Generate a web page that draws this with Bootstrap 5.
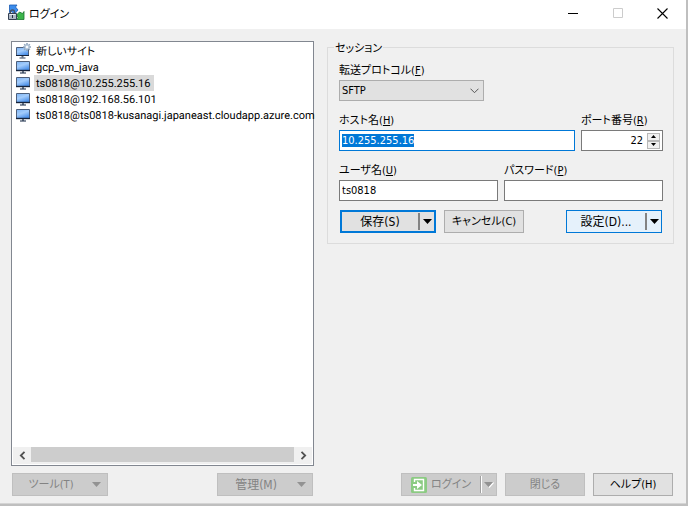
<!DOCTYPE html>
<html lang="ja">
<head>
<meta charset="utf-8">
<meta name="viewport" content="width=device-width, initial-scale=1">
<title>ログイン</title>
<link href="https://cdn.jsdelivr.net/npm/bootstrap@5.3.0/dist/css/bootstrap.min.css" rel="stylesheet">
<style>
body { font: 11px/16px "DejaVu Sans Condensed", "Noto Sans CJK JP", sans-serif; color: #000; background: #bfbfbf; }
body, button, select, input, .titlebar { font-feature-settings: "palt"; }
.ja { font-size: 11px; }
.kanji { font-size: 12px; }
.window { background: #f0f0f0; margin: 0 2px 2px 0; border-bottom: 1px solid #d4d4d4; }
.titlebar { height: 29px; background: #fff; padding: 0 1px 0 8px; }
.winbtn { width: 45px; height: 26px; padding: 0; border: 0; background: none; display: flex; align-items: center; justify-content: center; }
.content { display: grid; grid-template-columns: 303fr 347fr; column-gap: 13px; row-gap: 7px; grid-template-rows: 1fr auto; padding: 12px 12px 7px 11px; }
.sites { background: #fff; border: 1px solid #828790; padding: 1px; min-width: 0; }
.site { height: 16px; padding: 0 0 0 2px; border: 0; background: none; text-align: left; color: #000; display: flex; align-items: center; font-family: Roboto, "Noto Sans CJK JP", sans-serif; font-size: 11px; text-rendering: geometricPrecision; }
.site svg { flex: none; margin-right: 3px; }
.site span { height: 16px; line-height: 17px; padding: 0 4px 0 2px; white-space: nowrap; }
.site.active span { background: #d9d9d9; }
.hscroll { height: 17px; background: #f0f0f0; }
.hscroll button { width: 18px; height: 17px; border: 0; padding: 0; background: none; display: flex; align-items: center; justify-content: center; }
.thumb { background: #cdcdcd; height: 15px; }
.session { border: 1px solid #dcdcdc; margin-top: 6px; padding: 12px 10px 10px 11px; align-self: start; min-width: 0; position: relative; }
.session legend { position: absolute; top: -7px; left: 6px; width: auto; float: none; margin: 0; padding: 0 1px; line-height: 16px; background: #f0f0f0; }
.lbl { display: block; line-height: 22px; height: 20px; margin: 0; white-space: nowrap; }
.field { height: 21px; min-height: 0; padding: 0 2px; border: 1px solid #7a7a7a; border-radius: 0; background: #fff; font-size: 11px; line-height: 16px; color: #000; width: 100%; display: block; font-family: inherit; }
.field:focus { outline: 0; border-color: #0078d7; }
.field::selection { background: #0078d7; color: #fff; }
.protocol { width: 145px; background: #e1e1e1 url("data:image/svg+xml,%3Csvg xmlns='http://www.w3.org/2000/svg' viewBox='0 0 9 6'%3E%3Cpath d='M.5.7l4 4 4-4' fill='none' stroke='%23555'/%3E%3C/svg%3E") no-repeat right 4px center / 9px 6px; border-color: #adadad; appearance: none; }
.portbox { border: 1px solid #7a7a7a; background: #fff; height: 21px; padding-right: 2px; }
.portbox .field { border: 0; height: 19px; text-align: right; padding-right: 4px; min-width: 0; }
.spin { width: 13px; height: 8px; padding: 0; border: 1px solid #b8b8b8; background: #f0f0f0; display: flex; align-items: center; justify-content: center; }
.fields { gap: 9px; }
.pair { display: flex; gap: 6px; }
.pair > div { flex: 1 1 0; min-width: 0; }
.pair > .port { flex: none; width: 82px; }
.inset { padding: 0 1px; }
.cmd { height: 23px; width: 80px; padding: 0; border: 1px solid #adadad; border-radius: 0; background: #e1e1e1; color: #000; line-height: 16px; white-space: nowrap; display: flex; align-items: center; justify-content: center; font-family: inherit; }
.wide { width: 96px; }
.cmd button { border: 0; background: none; padding: 0; height: 100%; color: inherit; }
.arrow { width: 14px; display: flex; align-items: center; justify-content: center; }
.rule { width: 2px; height: 17px; background: #838383; flex: none; }
.main-save { border: 2px solid #0078d7; }
.hot { border-color: #0078d7; background: #e5f1fb; }
.off, .off:disabled { background: #cccccc; border-color: #bfbfbf; color: #838383; opacity: 1; }
.off .rule { background: linear-gradient(90deg, #a0a0a0 50%, #fff 50%); }
</style>
<script src="https://cdn.jsdelivr.net/npm/bootstrap@5.3.0/dist/js/bootstrap.bundle.min.js" defer></script>
</head>
<body class="d-flex flex-column min-vh-100">
<svg width="0" height="0" class="position-absolute" aria-hidden="true">
  <defs>
    <linearGradient id="screen" x1="0" y1="0" x2=".5" y2="1"><stop offset="0" stop-color="#7db4f5"/><stop offset=".5" stop-color="#a3ccfb"/><stop offset="1" stop-color="#4e92ea"/></linearGradient>
    <symbol id="monitor" viewBox="0 0 16 16">
      <path d="M1.500 2.500h13v9h-13z" fill="url(#screen)" stroke="#4d5f7b"/>
      <path d="M1 11.500h14" stroke="#16243c" stroke-width="1.400"/>
      <path d="M7 12h2v2H7z" fill="#5d6a7c"/><path d="M5 14h6" stroke="#35455e" stroke-width="1.200"/>
    </symbol>
  </defs>
</svg>
<div class="window d-flex flex-column flex-grow-1">
  <header class="titlebar d-flex align-items-start">
    <svg class="mt-1" width="17" height="17" viewBox="0 0 17 17" aria-hidden="true">
      <path d="M1.500 1h7.500L7.500 3l2.500 3-3.500 4L3 7 1.500 8.500z" fill="#3b8cec" stroke="#1a5cb4" stroke-width=".8"/>
      <path d="M16 15.500H8.500l1.500-2-1.500-2.500 3-3 3 1.500L16 7.500z" fill="#3cb54b" stroke="#17722c" stroke-width=".8"/>
      <path d="M2.500 9.500V8a2 2 0 0 1 4 0v1.500" fill="none" stroke="#465264" stroke-width="1.400"/>
      <path d="M.5 9.500h8v6h-8z" fill="#aeb8c5" stroke="#354052"/><path d="M1.500 10.500h6" stroke="#e8edf2"/>
      <path d="M4 11h1v3H4z" fill="#293444"/>
    </svg>
    <span class="ms-1 align-self-center">ログイン</span>
    <div class="ms-auto d-flex">
      <button class="winbtn" type="button" aria-label="最小化"><svg width="10" height="10" viewBox="0 0 10 10"><path d="M0 5.500h10" stroke="#000"/></svg></button>
      <button class="winbtn" type="button" aria-label="最大化" disabled><svg width="10" height="10" viewBox="0 0 10 10"><path d="M.5.5h9v9h-9z" fill="none" stroke="#ccc"/></svg></button>
      <button class="winbtn" type="button" aria-label="閉じる"><svg width="11" height="11" viewBox="0 0 11 11"><path d="M.5.5l10 10m0-10l-10 10" stroke="#000" stroke-width="1.100"/></svg></button>
    </div>
  </header>
  <main class="content flex-grow-1">
    <section class="sites d-flex flex-column" aria-label="サイト">
      <div class="d-flex flex-column align-items-start flex-grow-1">
        <button type="button" class="site"><svg width="16" height="16" viewBox="0 0 16 16"><path d="M1.500 4.500h12v8h-12z" fill="url(#screen)" stroke="#4d5f7b"/><path d="M1 12.500h13" stroke="#16243c"/><path d="M6.500 13h2v1.500h-2z" fill="#5d6a7c"/><path d="M4.500 15h6" stroke="#35455e"/><path d="M12 0v8M8 4h8M9.200 1.200l5.600 5.600m0-5.600L9.200 6.800" stroke="#8fa5bd" stroke-width="1.600"/><circle cx="12" cy="4" r="2" fill="#f4f8fc" stroke="#a9bed4"/></svg><span>新しいサイト</span></button>
        <button type="button" class="site"><svg width="16" height="16"><use href="#monitor"/></svg><span>gcp_vm_java</span></button>
        <button type="button" class="site active"><svg width="16" height="16"><use href="#monitor"/></svg><span>ts0818@10.255.255.16</span></button>
        <button type="button" class="site"><svg width="16" height="16"><use href="#monitor"/></svg><span>ts0818@192.168.56.101</span></button>
        <button type="button" class="site"><svg width="16" height="16"><use href="#monitor"/></svg><span>ts0818@ts0818-kusanagi.japaneast.cloudapp.azure.com</span></button>
      </div>
      <div class="hscroll d-flex">
        <button type="button" aria-label="左へ"><svg width="7" height="9" viewBox="0 0 7 9"><path d="M5.500.8L1.800 4.500l3.700 3.700" fill="none" stroke="#505050" stroke-width="1.800"/></svg></button>
        <div class="thumb flex-grow-1"></div>
        <button type="button" aria-label="右へ"><svg width="7" height="9" viewBox="0 0 7 9"><path d="M1.500.8l3.700 3.700-3.700 3.700" fill="none" stroke="#505050" stroke-width="1.800"/></svg></button>
      </div>
    </section>
    <fieldset class="session">
      <legend class="ja">セッション</legend>
      <div class="fields d-flex flex-column">
        <div><label class="lbl ja" for="proto">転送プロトコル(<u>F</u>)</label>
          <select class="field protocol" id="proto"><option>SFTP</option></select></div>
        <div class="pair">
          <div><label class="lbl ja" for="host">ホスト名(<u>H</u>)</label><input class="field" id="host" value="10.255.255.16"></div>
          <div class="port"><label class="lbl ja" for="port">ポート番号(<u>R</u>)</label>
            <div class="portbox d-flex align-items-center"><input class="field" id="port" value="22" inputmode="numeric">
              <div class="d-flex flex-column"><button class="spin" type="button" aria-label="増やす"><svg width="5" height="3" viewBox="0 0 5 3"><path d="M0 3l2.500-3L5 3z"/></svg></button><button class="spin" type="button" aria-label="減らす"><svg width="5" height="3" viewBox="0 0 5 3"><path d="M0 0l2.500 3L5 0z"/></svg></button></div>
            </div></div>
        </div>
        <div class="pair">
          <div><label class="lbl ja" for="user">ユーザ名(<u>U</u>)</label><input class="field" id="user" value="ts0818"></div>
          <div><label class="lbl ja" for="pass">パスワード(<u>P</u>)</label><input class="field" id="pass" type="password"></div>
        </div>
        <div class="d-flex gap-2 inset">
          <div class="cmd wide main-save"><button type="button" class="kanji flex-grow-1">保存(S)</button><span class="rule"></span><button type="button" class="arrow" aria-label="保存メニュー"><svg width="9" height="5" viewBox="0 0 9 5"><path d="M0 0h9L4.500 5z"/></svg></button></div>
          <button type="button" class="cmd ja">キャンセル(C)</button>
          <div class="cmd wide hot ms-auto"><button type="button" class="kanji flex-grow-1">設定(D)...</button><span class="rule"></span><button type="button" class="arrow" aria-label="設定メニュー"><svg width="9" height="5" viewBox="0 0 9 5"><path d="M0 0h9L4.500 5z"/></svg></button></div>
        </div>
      </div>
    </fieldset>
    <div class="d-flex justify-content-between inset">
      <button type="button" class="cmd wide off" disabled><span class="ja flex-grow-1">ツール(T)</span><span class="arrow me-1"><svg width="9" height="5" viewBox="0 0 9 5"><path d="M0 0h9L4.500 5z" fill="#929292"/></svg></span></button>
      <button type="button" class="cmd wide off" disabled><span class="kanji flex-grow-1">管理(M)</span><span class="arrow me-1"><svg width="9" height="5" viewBox="0 0 9 5"><path d="M0 0h9L4.500 5z" fill="#929292"/></svg></span></button>
    </div>
    <div class="d-flex justify-content-end gap-2 inset">
      <div class="cmd wide off"><button type="button" class="flex-grow-1 d-flex align-items-center justify-content-center gap-1" disabled><svg width="16" height="16" viewBox="0 0 16 16" aria-hidden="true"><rect width="16" height="16" rx="1.500" fill="#8ccb83"/><path d="M3.500 5V2.500h9v11h-9V11" fill="none" stroke="#fff" stroke-width="1.400"/><path d="M2 7h4V4l5 4-5 4V9H2z" fill="#fff"/></svg><span class="ja">ログイン</span></button><span class="rule"></span><button type="button" class="arrow" aria-label="ログインメニュー" disabled><svg width="10" height="6" viewBox="0 0 10 6"><path d="M9.500.5L5 5.500" stroke="#fff" stroke-width="1.300"/><path d="M0 0h9L4.500 5z" fill="#929292"/></svg></button></div>
      <button type="button" class="cmd ja off" disabled>閉じる</button>
      <button type="button" class="cmd ja">ヘルプ(H)</button>
    </div>
  </main>
</div>
<script>
  const host = document.getElementById('host');
  host.focus();
  host.select();
</script>
</body>
</html>
